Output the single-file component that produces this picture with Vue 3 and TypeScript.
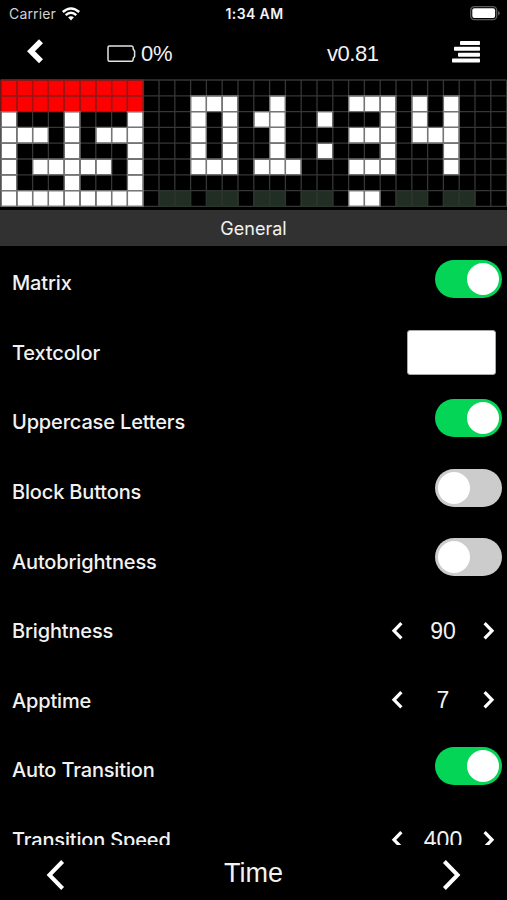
<script setup lang="ts">
import { ref } from 'vue'

type Setting =
  | { kind: 'toggle'; label: string; on: boolean }
  | { kind: 'color'; label: string }
  | { kind: 'stepper'; label: string; value: number; step: number }

const CELL = 15.8

// r = red, w = white, g = dim green, . = off
const pixels: string[] = [
  'rrrrrrrrr.......................',
  'rrrrrrrrr...www..w....www.w.w...',
  'w...w...w...w.w.ww..w...w.w.w...',
  'www.w.www...w.w..w....www.www...',
  'w...w...w...w.w..w..w...w...w...',
  'w.wwwww.w...www.www...www...w...',
  'w...w...w.......................',
  'wwwwwwwww.gg.gg.gg.gg.ww.gg.gg..',
]

const lit = pixels.flatMap((row, y) =>
  [...row].map((c, x) => ({ c, x, y })).filter((p) => p.c !== '.'),
)

const settings = ref<Setting[]>([
  { kind: 'toggle', label: 'Matrix', on: true },
  { kind: 'color', label: 'Textcolor' },
  { kind: 'toggle', label: 'Uppercase Letters', on: true },
  { kind: 'toggle', label: 'Block Buttons', on: false },
  { kind: 'toggle', label: 'Autobrightness', on: false },
  { kind: 'stepper', label: 'Brightness', value: 90, step: 1 },
  { kind: 'stepper', label: 'Apptime', value: 7, step: 1 },
  { kind: 'toggle', label: 'Auto Transition', on: true },
  { kind: 'stepper', label: 'Transition Speed', value: 400, step: 50 },
])
</script>

<template>
  <div class="screen">
    <header class="status">
      <div class="carrier">
        <span class="carrier-name">Carrier</span>
        <svg class="wifi" width="18" height="14" viewBox="0 0 18 14">
          <path d="M0.8 5Q9-2 17.2 5" />
          <path d="M3.7 8.1Q9 3.4 14.3 8.1" />
          <path class="dot" d="M6.1 10.3Q9 8 11.9 10.3L9 13.4Z" />
        </svg>
      </div>
      <span class="clock">1:34 AM</span>
      <svg class="phone-battery" width="30" height="15" viewBox="0 0 30 15">
        <rect x="0.7" y="0.7" width="26" height="13" rx="3.6" fill="none" stroke="#5c5c5c" stroke-width="1.3" />
        <rect x="2.3" y="2.3" width="22.8" height="9.8" rx="2" fill="#fff" />
        <path d="M28 5q1.7.6 1.7 2.2T28 9.5Z" fill="#5c5c5c" />
      </svg>
    </header>

    <nav class="toolbar">
      <button class="back" aria-label="Back">
        <svg width="17" height="25" viewBox="0 0 17 25"><path d="M14 2.3L4 12.3L14 22.3" /></svg>
      </button>
      <div class="device-battery">
        <svg width="29" height="18" viewBox="0 0 29 18">
          <path d="M2.5 1H24.8Q26.1 1 26.2 3V4.2L27.6 6V11.5L26.2 13.2V14.3Q26 16.2 24.8 16.2H2.5Q1 16.2 1 14.7V2.5Q1 1 2.5 1Z" />
        </svg>
        <span>0%</span>
      </div>
      <span class="version">v0.81</span>
      <button class="menu" aria-label="Menu">
        <svg width="28" height="22" viewBox="0 0 28 22">
          <rect x="8" y="0" width="20" height="4" rx=".8" />
          <rect x="2" y="5.8" width="26" height="4" rx=".8" />
          <rect x="6" y="11.7" width="22" height="4" rx=".8" />
          <rect x="0" y="17.6" width="28" height="4" rx=".8" />
        </svg>
      </button>
    </nav>

    <svg class="matrix" width="507" height="128" viewBox="0 0 507 128">
      <g transform="translate(1 1)">
        <rect
          v-for="p in lit"
          :key="`${p.x}-${p.y}`"
          :class="p.c"
          :x="p.x * CELL"
          :y="p.y * CELL"
          :width="CELL"
          :height="CELL"
        />
        <line v-for="i in 33" :key="`v${i}`" class="grid" :x1="(i - 1) * CELL" :x2="(i - 1) * CELL" y1="0" :y2="8 * CELL" />
        <line v-for="i in 9" :key="`h${i}`" class="grid" :y1="(i - 1) * CELL" :y2="(i - 1) * CELL" x1="0" :x2="32 * CELL" />
        <rect v-for="p in lit" :key="`e${p.x}-${p.y}`" :class="['edge', p.c]" :x="p.x * CELL" :y="p.y * CELL" :width="CELL" :height="CELL" />
      </g>
    </svg>

    <h2 class="section"><span>General</span></h2>

    <main class="list">
      <div v-for="item in settings" :key="item.label" class="row">
        <span class="label">{{ item.label }}</span>
        <button
          v-if="item.kind === 'toggle'"
          class="toggle"
          :class="{ on: item.on }"
          role="switch"
          :aria-checked="item.on"
          @click="item.on = !item.on"
        >
          <span class="knob"></span>
        </button>
        <span v-else-if="item.kind === 'color'" class="swatch"></span>
        <div v-else class="stepper">
          <button aria-label="Decrease" @click="item.value -= item.step">
            <svg width="13" height="20" viewBox="0 0 13 20"><path d="M10.4 2.2L3 9.8L10.4 17.4" /></svg>
          </button>
          <span class="value">{{ item.value }}</span>
          <button aria-label="Increase" @click="item.value += item.step">
            <svg width="13" height="20" viewBox="0 0 13 20"><path d="M2.6 2.2L10 9.8L2.6 17.4" /></svg>
          </button>
        </div>
      </div>
    </main>

    <footer class="pager">
      <button aria-label="Previous app">
        <svg width="20" height="32" viewBox="0 0 20 32"><path d="M17.6 2.5L4.4 16L17.6 29.5" /></svg>
      </button>
      <span class="app-name">Time</span>
      <button aria-label="Next app">
        <svg width="20" height="32" viewBox="0 0 20 32"><path d="M2.4 2.5L15.6 16L2.4 29.5" /></svg>
      </button>
    </footer>
  </div>
</template>

<style>
body {
  background: #000;
}
</style>

<style scoped>
.screen {
  display: flex;
  flex-direction: column;
  width: 507px;
  height: 900px;
  overflow: hidden;
  background: #000;
  color: #f2f2f2;
  font-family: Inter, sans-serif;
}
.screen > * {
  box-sizing: border-box;
  flex: none;
}
svg {
  display: block;
}
button {
  display: flex;
  padding: 0;
  border: 0;
  background: none;
}
button path {
  fill: none;
  stroke: #fff;
}
.status {
  display: grid;
  grid-template-columns: 1fr auto 1fr;
  align-items: center;
  height: 27px;
  padding: 0 7px 0 9px;
  font-size: 14px;
}
.carrier {
  display: flex;
  align-items: center;
  gap: 6px;
}
.carrier-name {
  color: #d2d2d2;
  letter-spacing: 0.15px;
}
.wifi {
  fill: none;
  stroke: #fff;
  stroke-width: 2.5;
}
.wifi .dot {
  fill: #fff;
  stroke: none;
}
.clock {
  letter-spacing: 0.4px;
  font-weight: 600;
}
.phone-battery {
  justify-self: end;
}
.toolbar {
  display: grid;
  grid-template-columns: 107px 220px 125px 28px;
  align-items: center;
  height: 52px;
  padding-top: 1px;
  font-family: "Liberation Sans", sans-serif;
  font-size: 22px;
}
.back {
  padding: 0 0 4px 27px;
}
.back path {
  stroke-width: 5.6;
}
.device-battery {
  display: flex;
  align-items: center;
  gap: 5px;
}
.device-battery span {
  letter-spacing: -0.3px;
}
.version {
  letter-spacing: -0.45px;
}
.device-battery path {
  fill: none;
  stroke: #e4e4e4;
  stroke-width: 1.5;
}
.menu {
  padding-bottom: 4px;
  fill: #fff;
}
.r {
  fill: #fe0000;
}
.w {
  fill: #fff;
}
.g {
  fill: #212e23;
}
.grid {
  stroke: #363636;
  stroke-width: 1.3;
}
.edge {
  fill: none;
  stroke: #777;
  stroke-width: 1.1;
}
.edge.r {
  stroke: #a51212;
}
.edge.g {
  stroke: #2c352d;
}
.section {
  display: flex;
  align-items: center;
  justify-content: center;
  height: 36px;
  margin: 3px 0 2px;
  background: #313131;
  font-size: 18px;
  font-weight: 400;
}
.list {
  height: 597px;
  overflow: hidden;
}
.row {
  display: flex;
  align-items: center;
  justify-content: space-between;
  height: 69.6px;
  padding: 0 5px 0 12px;
}
.label {
  padding-top: 1px;
  font-size: 20px;
  font-weight: 500;
  letter-spacing: -0.16px;
}
.toggle {
  width: 67px;
  height: 38px;
  margin-bottom: 8px;
  padding: 3px;
  border-radius: 19px;
  background: #ccc;
}
.toggle.on {
  justify-content: flex-end;
  background: #04d556;
}
.knob {
  width: 32px;
  height: 32px;
  border-radius: 50%;
  background: #fff;
}
.swatch {
  box-sizing: border-box;
  width: 89px;
  height: 45px;
  margin-right: 6px;
  border: 1px solid #aaa;
  border-radius: 3px;
  background: #fff;
}
.stepper {
  display: flex;
  align-items: center;
  width: 104px;
  margin-right: 7px;
}
.stepper path {
  stroke-width: 3.2;
}
.value {
  flex: 1;
  padding-top: 1px;
  text-align: center;
  font-family: "Liberation Sans", sans-serif;
  font-size: 23px;
}
.pager {
  display: flex;
  align-items: center;
  justify-content: space-between;
  height: 55px;
  padding: 4px 45px 0;
}
.pager path {
  stroke-width: 4;
}
.app-name {
  padding-bottom: 2px;
  font-family: "Liberation Sans", sans-serif;
  font-size: 27px;
}
</style>
